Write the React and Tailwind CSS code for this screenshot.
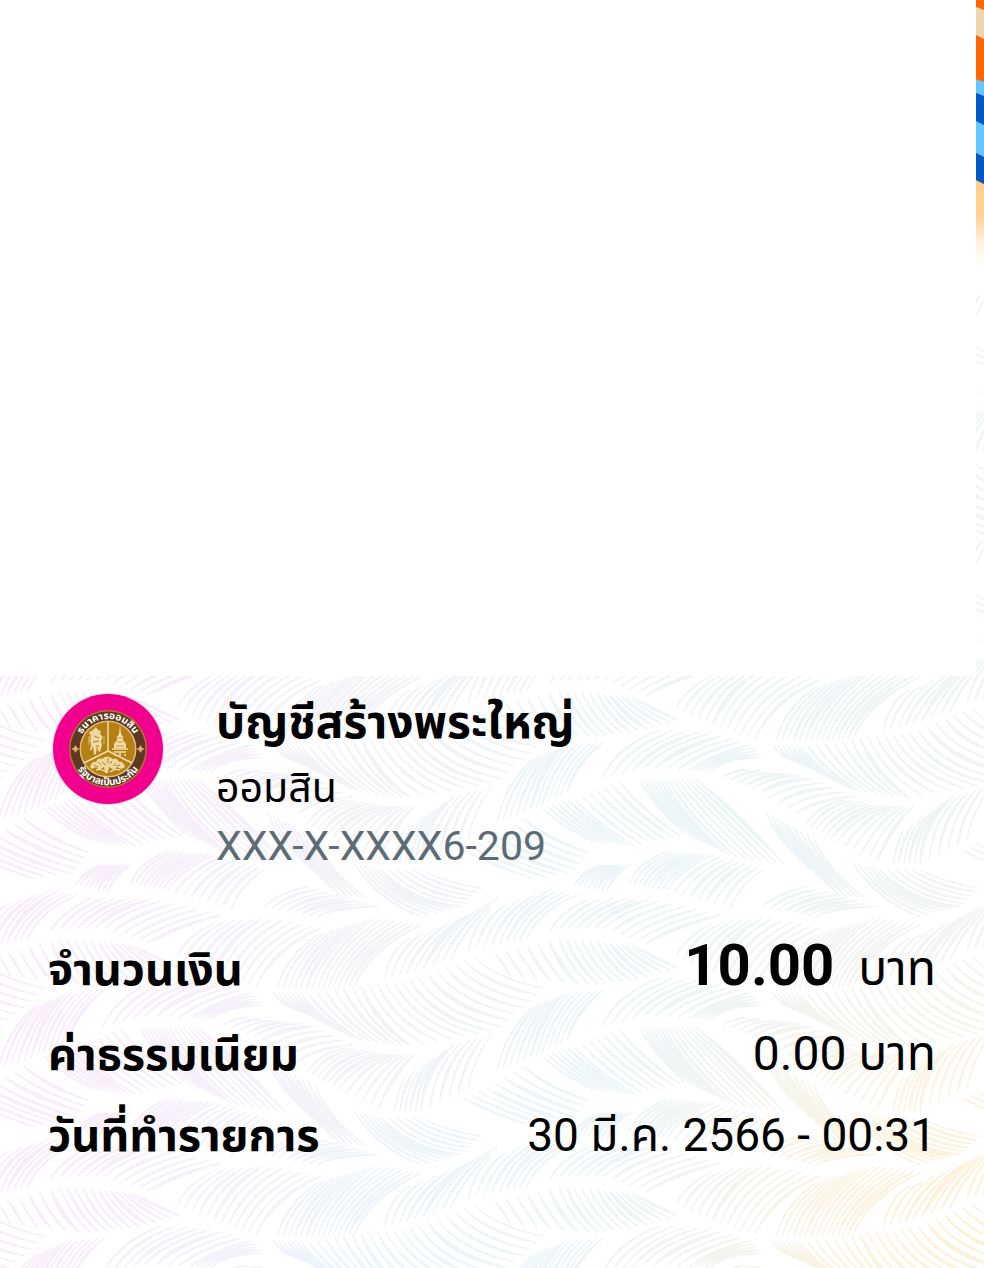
import React from 'react';

const details = [
  { label: 'จำนวนเงิน', amount: '10.00', value: 'บาท', size: 'text-[48px]' },
  { label: 'ค่าธรรมเนียม', value: '0.00 บาท', size: 'text-[48px]' },
  { label: 'วันที่ทำรายการ', value: '30 มี.ค. 2566 - 00:31', size: 'text-[46px]' },
];

// Size of one repeat of the leaf pattern
const TILE_W = 1497;
const TILE_H = 744;

// Each leaf: number of blades, x/y shift, then key blades (start, control, end)
const leaves = [
  [12, 0, 0, [230, 115, 250, 60, 340, 15], [350, 170, 390, 60, 500, 0], [465, 205, 520, 90, 660, 30]],
  [15, 0, 0, [530, 210, 550, 120, 650, 50], [650, 210, 690, 90, 820, 0], [760, 205, 800, 100, 960, 20]],
  [9, 0, 0, [850, 180, 870, 90, 930, 60], [940, 160, 980, 70, 1080, 0], [1050, 125, 1090, 30, 1190, -60]],
  [9, 897, -174, [205, 270, 225, 190, 270, 150], [300, 250, 330, 150, 450, 90], [380, 235, 420, 150, 530, 105]],
  [12, 897, -174, [450, 210, 490, 150, 570, 115], [600, 200, 650, 150, 760, 120], [740, 250, 820, 200, 960, 165]],
  [18, 897, -174, [285, 280, 310, 310, 330, 350], [470, 240, 500, 320, 560, 375], [600, 245, 640, 320, 700, 360], [700, 260, 760, 290, 835, 325]],
  [27, 0, 0, [520, 225, 540, 265, 610, 280], [610, 230, 660, 300, 770, 365], [780, 205, 830, 320, 930, 385], [940, 185, 1010, 300, 1190, 335], [1117, 116, 1180, 180, 1327, 211]],
  [13, 0, 0, [5, 325, 50, 230, 180, 180], [130, 295, 190, 230, 330, 190], [270, 300, 340, 250, 450, 225], [330, 305, 380, 260, 485, 262]],
  [10, 0, 0, [370, 320, 420, 295, 440, 300], [470, 360, 530, 320, 620, 320], [590, 430, 640, 390, 760, 380]],
  [12, 0, 0, [620, 460, 660, 400, 740, 390], [700, 510, 760, 430, 860, 410], [830, 575, 880, 460, 940, 410]],
  [11, 0, 0, [880, 580, 890, 520, 910, 480], [960, 580, 970, 450, 1060, 380], [1100, 510, 1120, 420, 1170, 350]],
  [12, 897, -174, [290, 630, 320, 510, 400, 440], [400, 590, 440, 450, 500, 400], [500, 540, 530, 450, 610, 390]],
  [13, 897, -174, [430, 590, 480, 640, 580, 690], [520, 560, 600, 640, 700, 700], [660, 510, 730, 600, 840, 670]],
  [14, 0, 0, [120, 335, 160, 400, 250, 490], [200, 330, 260, 450, 400, 560], [290, 330, 390, 410, 550, 580]],
  [9, 0, 0, [500, 430, 530, 500, 600, 570], [560, 460, 620, 570, 720, 680], [640, 500, 680, 600, 790, 680]],
  [11, 0, 0, [760, 580, 830, 690, 960, 740], [840, 600, 930, 700, 1080, 710], [960, 600, 1040, 640, 1140, 655]],
  [8, 897, -174, [190, 715, 280, 760, 400, 800], [270, 680, 380, 740, 520, 780], [370, 620, 440, 680, 560, 720]],
  [17, 0, 0, [90, 640, 110, 580, 200, 545], [200, 660, 240, 600, 340, 555], [390, 715, 430, 630, 490, 600]],
  [8, -600, 570, [525, 75, 545, 35, 600, 15], [620, 95, 640, 40, 690, 15]],
  [8, 0, 0, [490, 710, 530, 670, 620, 650], [650, 740, 700, 710, 830, 710]],
];

const widths = [3, 5, 2, 7, 4, 10, 3, 6];

const bladePath = (keys, t, dx, dy, width) => {
  const pos = t * (keys.length - 1);
  const i = Math.min(Math.floor(pos), keys.length - 2);
  const f = pos - i;
  const [x0, y0, cx, cy, x1, y1] = keys[i].map(
    (v, k) => v + (keys[i + 1][k] - v) * f + (k % 2 ? dy : dx)
  );
  const len = Math.hypot(x1 - x0, y1 - y0) || 1;
  const nx = (-(y1 - y0) / len) * width;
  const ny = ((x1 - x0) / len) * width;
  return `M${x0} ${y0}Q${cx + nx} ${cy + ny} ${x1} ${y1}Q${cx - nx} ${cy - ny} ${x0} ${y0}Z`;
};

const tilePath = leaves
  .map(([count, dx, dy, ...keys]) =>
    Array.from({ length: count }, (_, n) =>
      bladePath(keys, n / (count - 1), dx, dy, widths[n % widths.length])
    ).join('')
  )
  .join('');

const columns = [-2, -1, 0];
const rows = [-2, -1, 0, 1, 2];

const LeafBackground = () => (
  <svg
    className="absolute inset-0 h-full w-full"
    viewBox="0 0 984 1268"
    preserveAspectRatio="xMaxYMax slice"
    aria-hidden="true"
  >
    <defs>
      <path id="leaf-tile" d={tilePath} />
      <mask id="leaf-mask" maskUnits="userSpaceOnUse" x="0" y="0" width="984" height="1268">
        <g
          transform="translate(600 670) scale(0.33333)"
          fill="#fff"
          stroke="#fff"
          strokeWidth="4"
          strokeLinejoin="round"
        >
          {rows.map((r) =>
            columns.map((c) => (
              <use key={`${r}:${c}`} href="#leaf-tile" x={c * TILE_W} y={r * TILE_H} />
            ))
          )}
        </g>
      </mask>
      <linearGradient id="leaf-tint" x1="0" x2="1" y1="0" y2="0">
        <stop offset="0" stopColor="#f9ecfb" />
        <stop offset="0.22" stopColor="#f6f0fa" />
        <stop offset="0.38" stopColor="#f2f3f7" />
        <stop offset="0.55" stopColor="#edf5f8" />
        <stop offset="0.75" stopColor="#eef5f7" />
        <stop offset="1" stopColor="#eff5f5" />
      </linearGradient>
      <radialGradient id="leaf-gold" gradientUnits="userSpaceOnUse" cx="980" cy="1220" r="380">
        <stop offset="0" stopColor="#fdf1d6" />
        <stop offset="0.4" stopColor="#fcf4e4" />
        <stop offset="1" stopColor="#f6f4ee" stopOpacity="0" />
      </radialGradient>
      <radialGradient id="leaf-blue" gradientUnits="userSpaceOnUse" cx="400" cy="1290" r="260">
        <stop offset="0" stopColor="#e9f6fb" />
        <stop offset="1" stopColor="#eff5fa" stopOpacity="0" />
      </radialGradient>
      <linearGradient id="sand-fade" x1="0" x2="0" y1="0" y2="1">
        <stop offset="0" stopColor="#ffd08a" />
        <stop offset="0.4" stopColor="#fed093" />
        <stop offset="0.75" stopColor="#fff4e4" />
        <stop offset="1" stopColor="#ffffff" />
      </linearGradient>
    </defs>
    <g mask="url(#leaf-mask)">
      <rect y="296" width="984" height="972" fill="url(#leaf-tint)" />
      <rect y="676" width="984" height="592" fill="url(#leaf-blue)" />
      <rect y="676" width="984" height="592" fill="url(#leaf-gold)" />
    </g>
    {/* Coloured waves along the right edge of the header */}
    <rect x="970" y="178" width="14" height="90" fill="url(#sand-fade)" />
    <path d="M976 0H984V184L976 180Z" fill="#ff6600" />
    <path d="M976 7L984 10V39L976 35Z" fill="#edd5ae" />
    <path d="M976 79L984 82V97L976 93Z" fill="#66c6ff" />
    <path d="M976 93L984 96V126L976 122Z" fill="#0059c9" />
    <path d="M976 121L984 125V157L976 153Z" fill="#66c6ff" />
    <path d="M976 153L984 157V184L976 180Z" fill="#0059c9" />
  </svg>
);

const BankLogo = () => (
  <svg className="h-28 w-28 shrink-0" viewBox="0 0 112 112" role="img" aria-label="ออมสิน">
    <defs>
      <path id="logo-top" d="M26 56A30 30 0 0 1 86 56" />
      <path id="logo-bottom" d="M19.500 56A36.500 36.500 0 0 0 92.500 56" />
    </defs>
    <circle cx="56" cy="56" r="56" fill="#f7d3ea" />
    <circle cx="56" cy="56" r="55" fill="#f0008c" />
    <circle cx="56" cy="56" r="39" fill="#b9722c" />
    <circle cx="56" cy="56" r="37.500" fill="#5d3822" />
    <circle cx="56" cy="56" r="28.500" fill="#e0bd72" />
    <circle cx="56" cy="56" r="27" fill="#b57f14" />
    <path d="M56 29V58M56 58L32 70M56 58L80 70" stroke="#f3e2b4" strokeWidth="1.400" fill="none" />
    {/* Deity */}
    <path
      d="M44 34l2 3 3 1-1 3 3 3-2 4 1 4-2 7-2-1-1-6-1 9-2 1-1-9-2 5-1-1 1-6-2-3 1-5-1-4 3-1z"
      fill="#eedaa0"
    />
    <path d="M38 41v13M51 40v12M42 43l5 2M41 49l6-1M44 53h3" stroke="#b57f14" strokeWidth="1" />
    <path d="M37 43v9M52 43v8" stroke="#e6cc88" strokeWidth="0.800" />
    {/* Crown on its stand */}
    <path d="M68 32l1 9 2 3v3l3 4v4h-12v-4l3-4v-3l2-3z" fill="#f1dfab" />
    <path d="M60 56h16M62 59h12M63 61v2M68 60v3M73 61v2" stroke="#f1dfab" strokeWidth="1.600" />
    <path d="M65 49h6M66 45h4M64 53h8" stroke="#b57f14" strokeWidth="0.800" />
    {/* Tree and foliage */}
    <path
      d="M38 74q2-6 6-5 2-5 6-3 5-5 11 0 4-2 6 3 4-1 6 5l-4 2-4-2-3 3-5-3-1 6h-3l-1-6-5 3-3-3-4 2z"
      fill="#eedaa0"
    />
    <path d="M42 72l4 2M46 69l3 3M50 69l4 3M60 68l-2 3M64 70l-3 3M68 72l-4 1M56 65v5" stroke="#b57f14" strokeWidth="1" />
    <path d="M44 77q5-2 10 2M58 79q5-4 10-2" stroke="#f1dfab" strokeWidth="1.400" fill="none" />
    <path d="M23.500 52l1.500 2.500 2.500 1.500-2.500 1.500-1.500 2.500-1.500-2.500-2.500-1.500 2.500-1.500z" fill="#e7a873" />
    <path d="M88.500 52l1.500 2.500 2.500 1.500-2.500 1.500-1.500 2.500-1.500-2.500-2.500-1.500 2.500-1.500z" fill="#e7a873" />
    <g fill="#fff" fontSize="10" fontWeight="700" textAnchor="middle">
      <text>
        <textPath href="#logo-top" startOffset="50%">ธนาคารออมสิน</textPath>
      </text>
      <text>
        <textPath href="#logo-bottom" startOffset="50%">รัฐบาลเป็นประกัน</textPath>
      </text>
    </g>
  </svg>
);

const App = () => {
  return (
    <main className="relative min-h-screen overflow-hidden bg-white font-['Roboto','Noto_Sans_Thai',sans-serif] text-black">
      <LeafBackground />
      <div className="relative">
        <div className="mr-2 h-[676px] bg-white" />
        <section className="flex items-start px-[52px] pt-[17px]">
          <BankLogo />
          <div className="ml-[52px]">
            <h1 className="text-[46px] leading-[58px] font-bold">บัญชีสร้างพระใหญ่</h1>
            <p className="mt-2 text-[41px] leading-[58px]">ออมสิน</p>
            <p className="text-[41px] leading-[58px] text-[#5c6b75]">XXX-X-XXXX6-209</p>
          </div>
        </section>
        <dl className="mt-[50px] flex flex-col px-12">
          {details.map(({ label, amount, value, size }) => (
            <div key={label} className="flex items-baseline justify-between leading-[80px] first:pb-1">
              <dt className="text-[45px] font-bold">{label}</dt>
              <dd className={`flex items-baseline gap-6 ${size}`}>
                {amount && <span className="text-[58px] font-bold">{amount}</span>}
                <span>{value}</span>
              </dd>
            </div>
          ))}
        </dl>
      </div>
    </main>
  );
};

export default App;
